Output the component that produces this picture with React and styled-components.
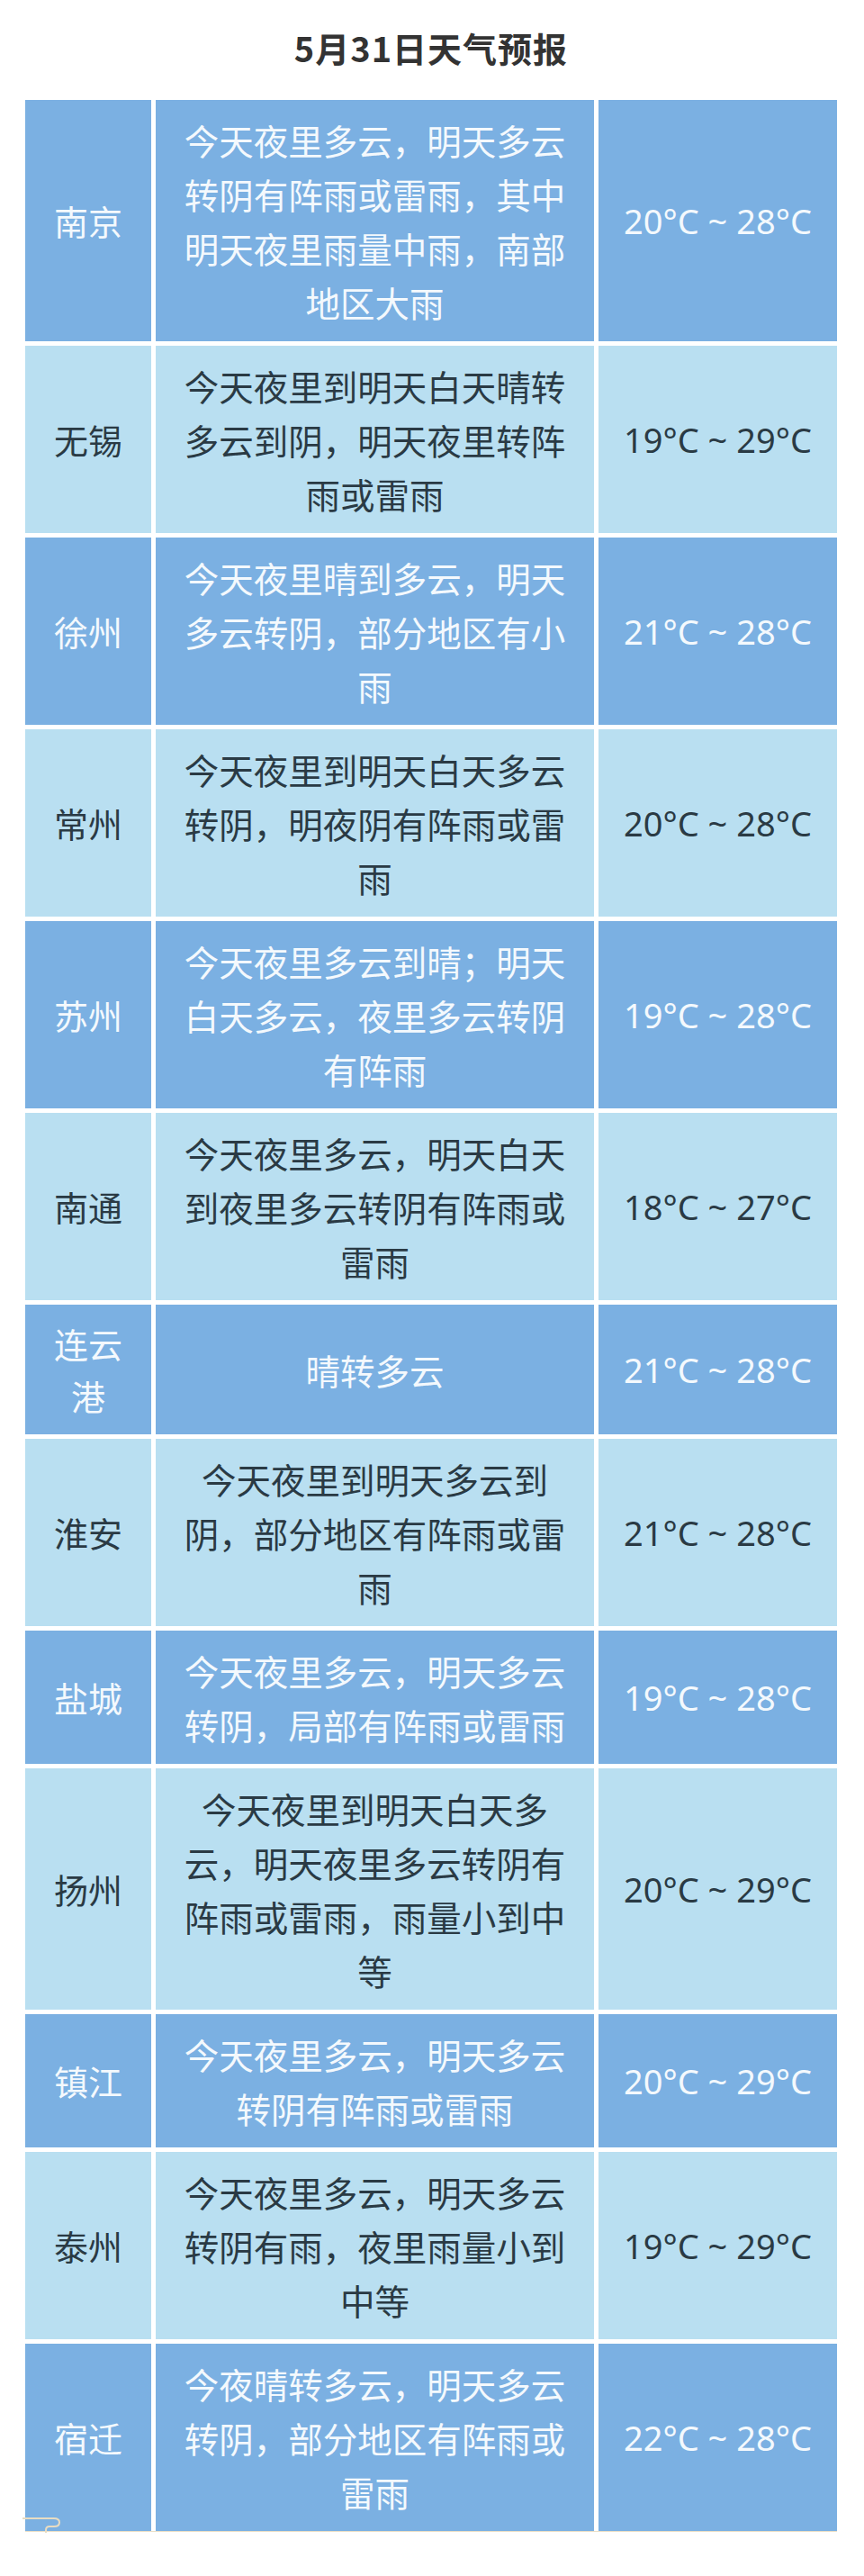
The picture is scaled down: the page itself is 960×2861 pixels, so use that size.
import React from "react";
import styled, { createGlobalStyle } from "styled-components";

const GlobalStyle = createGlobalStyle`
  body {
    margin: 0;
    background: #ffffff;
    font-family: "Noto Sans CJK SC", "Noto Sans", sans-serif;
  }
`;

const Page = styled.div`
  width: 960px;
  min-height: 2861px;
  background: #ffffff;
  padding: 0 30px 0 28px;
  box-sizing: border-box;
`;

const Title = styled.h1`
  margin: 0;
  padding: 26px 0 32px;
  line-height: 53px;
  font-size: 38px;
  font-weight: 700;
  letter-spacing: 1px;
  text-align: center;
  color: #333333;
`;

const Table = styled.div`
  position: relative;
  display: flex;
  flex-direction: column;
  gap: 5px;
  border-bottom: 1px solid #eadfc6;
`;

const Row = styled.div`
  display: grid;
  grid-template-columns: 140px 487px 265px;
  column-gap: 5px;
`;

const Cell = styled.div`
  display: flex;
  align-items: center;
  justify-content: center;
  padding: 14px ${(p) => p.$padX}px;
  background: ${(p) => (p.$dark ? "#7bb0e2" : "#b9dff1")};
  color: ${(p) => (p.$dark ? "#f4f9fd" : "#2a3a44")};
  text-align: center;
`;

const CityText = styled.span`
  font-size: 38px;
  line-height: 58px;
`;

const DescText = styled.span`
  font-size: 38.5px;
  line-height: 60px;
  line-break: strict;
`;

const TempText = styled.span`
  font-family: "Noto Sans", sans-serif;
  font-size: 38px;
  line-height: 60px;
  white-space: nowrap;
`;

const Curl = styled.svg`
  position: absolute;
  left: -4px;
  bottom: -2px;
`;

const rows = [
  { city: "南京", desc: "今天夜里多云，明天多云转阴有阵雨或雷雨，其中明天夜里雨量中雨，南部地区大雨", temp: "20°C ~ 28°C" },
  { city: "无锡", desc: "今天夜里到明天白天晴转多云到阴，明天夜里转阵雨或雷雨", temp: "19°C ~ 29°C" },
  { city: "徐州", desc: "今天夜里晴到多云，明天多云转阴，部分地区有小雨", temp: "21°C ~ 28°C" },
  { city: "常州", desc: "今天夜里到明天白天多云转阴，明夜阴有阵雨或雷雨", temp: "20°C ~ 28°C" },
  { city: "苏州", desc: "今天夜里多云到晴；明天白天多云，夜里多云转阴有阵雨", temp: "19°C ~ 28°C" },
  { city: "南通", desc: "今天夜里多云，明天白天到夜里多云转阴有阵雨或雷雨", temp: "18°C ~ 27°C" },
  { city: "连云港", desc: "晴转多云", temp: "21°C ~ 28°C" },
  { city: "淮安", desc: "今天夜里到明天多云到阴，部分地区有阵雨或雷雨", temp: "21°C ~ 28°C" },
  { city: "盐城", desc: "今天夜里多云，明天多云转阴，局部有阵雨或雷雨", temp: "19°C ~ 28°C" },
  { city: "扬州", desc: "今天夜里到明天白天多云，明天夜里多云转阴有阵雨或雷雨，雨量小到中等", temp: "20°C ~ 29°C" },
  { city: "镇江", desc: "今天夜里多云，明天多云转阴有阵雨或雷雨", temp: "20°C ~ 29°C" },
  { city: "泰州", desc: "今天夜里多云，明天多云转阴有雨，夜里雨量小到中等", temp: "19°C ~ 29°C" },
  { city: "宿迁", desc: "今夜晴转多云，明天多云转阴，部分地区有阵雨或雷雨", temp: "22°C ~ 28°C" },
];

const App = () => {
  return (
    <>
      <GlobalStyle />
      <Page>
        <Title>5月31日天气预报</Title>
        <Table>
          {rows.map((r, i) => {
            const dark = i % 2 === 0;
            return (
              <Row key={r.city}>
                <Cell $dark={dark} $padX={14}>
                  <CityText>{r.city}</CityText>
                </Cell>
                <Cell $dark={dark} $padX={22}>
                  <DescText>{r.desc}</DescText>
                </Cell>
                <Cell $dark={dark} $padX={8}>
                  <TempText>{r.temp}</TempText>
                </Cell>
              </Row>
            );
          })}
          <Curl width="48" height="20" viewBox="0 0 48 20">
            <path
              d="M1 4 H36 Q42 4 42 8.5 Q42 13 36 13 H31 Q27 13 27 17 V20"
              fill="none"
              stroke="#e8dcc2"
              strokeWidth="2"
            />
          </Curl>
        </Table>
      </Page>
    </>
  );
};

export default App;
